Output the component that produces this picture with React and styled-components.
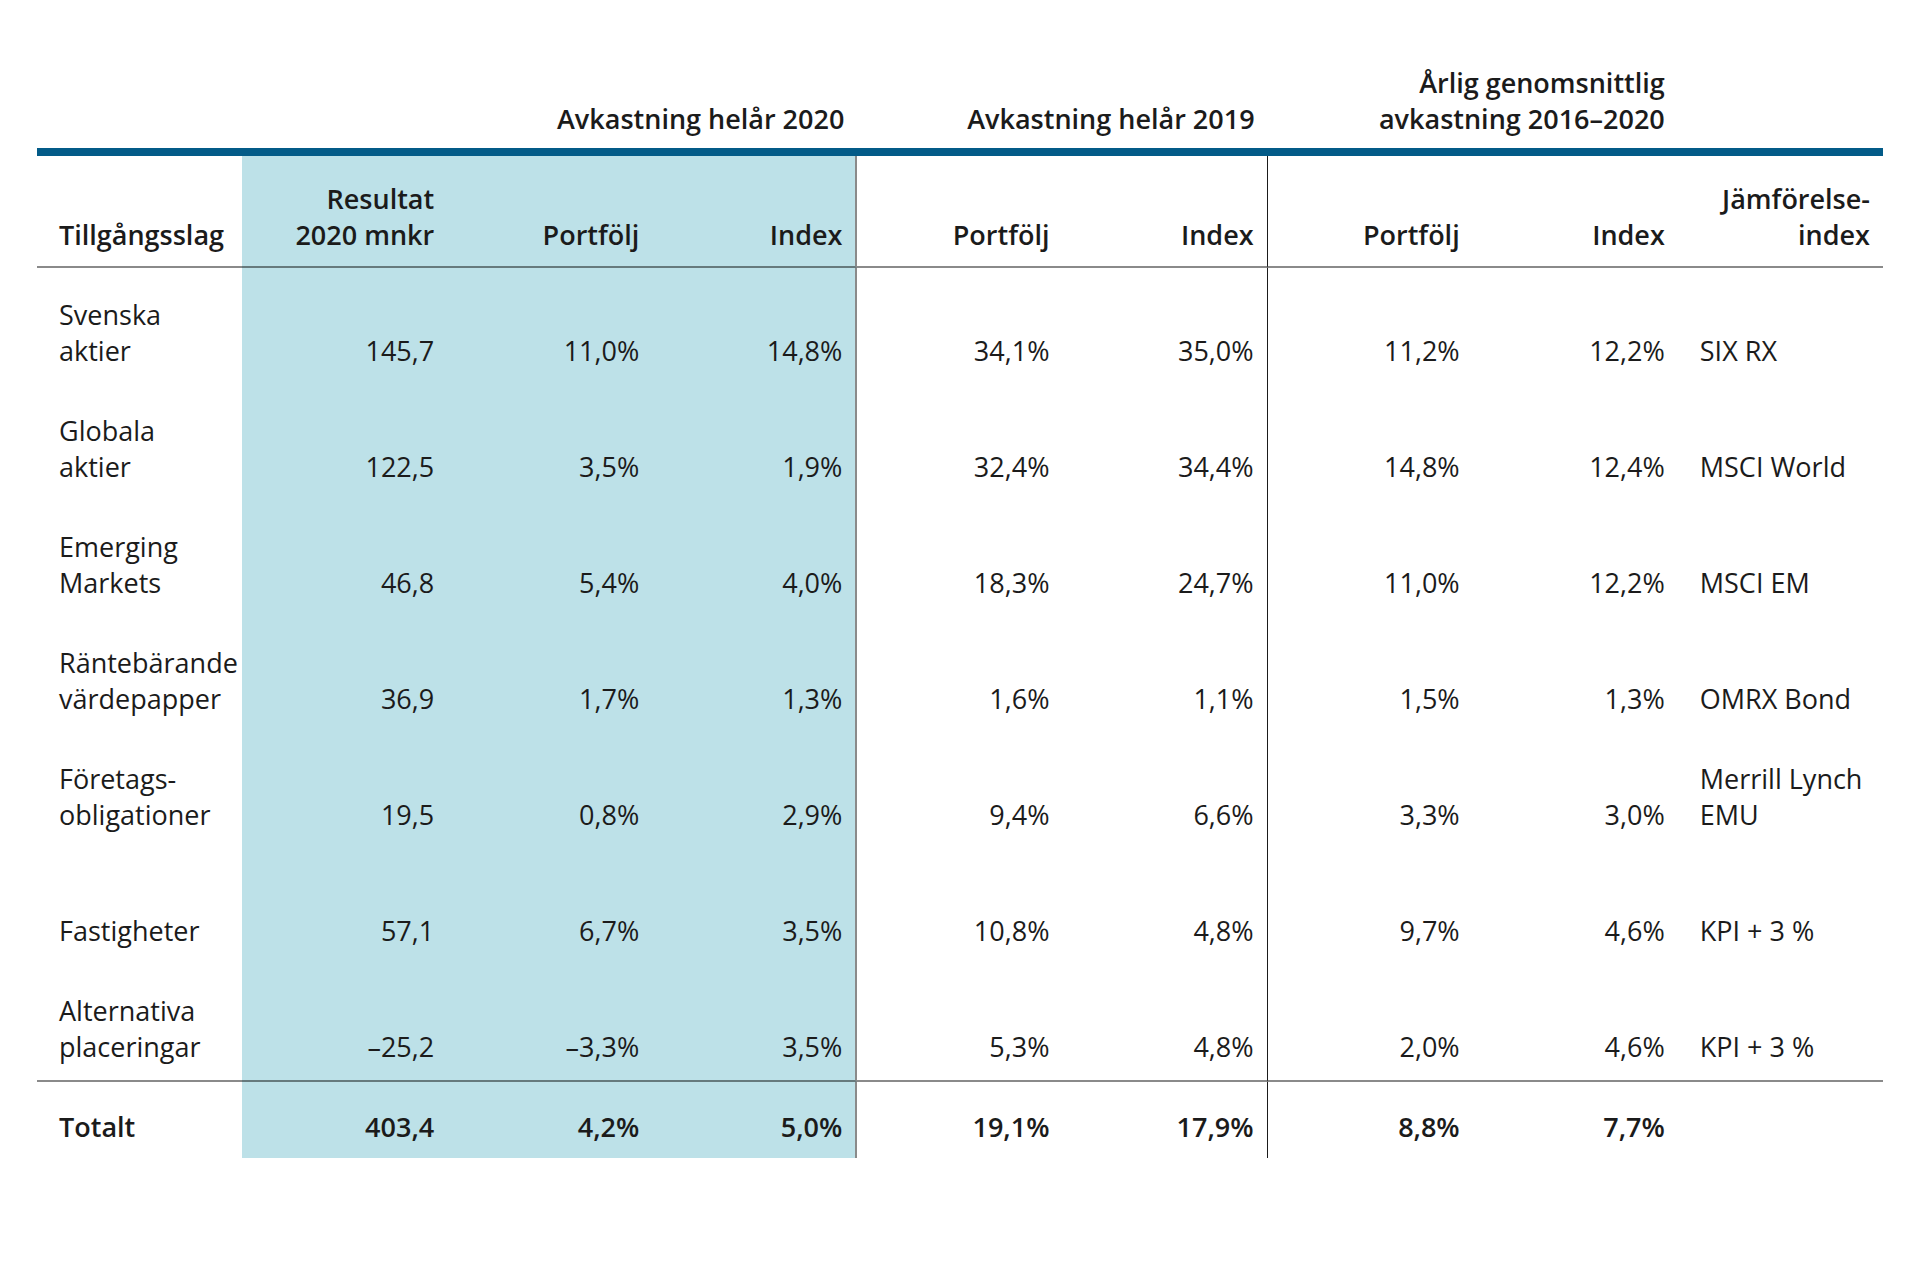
import React from 'react'
import styled, { createGlobalStyle, css } from 'styled-components'

const GlobalStyle = createGlobalStyle`
  html, body {
    margin: 0;
    padding: 0;
    background: #fff;
  }
  body {
    font-family: 'Open Sans', 'Noto Sans', 'Liberation Sans', sans-serif;
    color: #1b1b1b;
  }
`

const Page = styled.div`
  padding: 65px 37px 0;
`

const Table = styled.table`
  width: 1846px;
  table-layout: fixed;
  border-collapse: separate;
  border-spacing: 0;
  font-size: 27px;
  line-height: 36px;
`

const BodyRow = styled.tr`
  height: 116px;
`

const cellBase = css`
  padding: 0 13px 0 22px;
  vertical-align: bottom;
  text-align: ${(p) => p.$align || 'right'};
  white-space: nowrap;
  background: ${(p) => (p.$shade ? '#bde1e8' : 'transparent')};
  ${(p) =>
    p.$divider === 'soft' &&
    css`
      border-right: 2px solid #8a8a8a;
    `}
  ${(p) =>
    p.$divider === 'hard' &&
    css`
      border-right: 1px solid #1b1b1b;
    `}
`

const GroupCell = styled.th`
  ${cellBase};
  font-weight: 600;
  padding-bottom: 11px;
  border-bottom: 8px solid #035b88;
`

const HeadCell = styled.th`
  ${cellBase};
  font-weight: 600;
  padding-top: 25px;
  padding-bottom: 13px;
  border-bottom: 2px solid rgba(0, 0, 0, 0.46);
`

const Cell = styled.td`
  ${cellBase};
  font-weight: 400;
  padding-top: 29px;
  padding-bottom: 15px;
  ${(p) =>
    p.$last &&
    css`
      border-bottom: 2px solid rgba(0, 0, 0, 0.46);
    `}
`

const TotalCell = styled.td`
  ${cellBase};
  font-weight: 600;
  padding-top: 27px;
  padding-bottom: 13px;
`

const rows = [
  { label: ['Svenska', 'aktier'], values: ['145,7', '11,0%', '14,8%', '34,1%', '35,0%', '11,2%', '12,2%'], index: ['SIX RX'] },
  { label: ['Globala', 'aktier'], values: ['122,5', '3,5%', '1,9%', '32,4%', '34,4%', '14,8%', '12,4%'], index: ['MSCI World'] },
  { label: ['Emerging', 'Markets'], values: ['46,8', '5,4%', '4,0%', '18,3%', '24,7%', '11,0%', '12,2%'], index: ['MSCI EM'] },
  { label: ['Räntebärande', 'värdepapper'], values: ['36,9', '1,7%', '1,3%', '1,6%', '1,1%', '1,5%', '1,3%'], index: ['OMRX Bond'] },
  { label: ['Företags-', 'obligationer'], values: ['19,5', '0,8%', '2,9%', '9,4%', '6,6%', '3,3%', '3,0%'], index: ['Merrill Lynch', 'EMU'] },
  { label: ['Fastigheter'], values: ['57,1', '6,7%', '3,5%', '10,8%', '4,8%', '9,7%', '4,6%'], index: ['KPI + 3 %'] },
  { label: ['Alternativa', 'placeringar'], values: ['–25,2', '–3,3%', '3,5%', '5,3%', '4,8%', '2,0%', '4,6%'], index: ['KPI + 3 %'] },
]

const total = ['403,4', '4,2%', '5,0%', '19,1%', '17,9%', '8,8%', '7,7%']

const headers = ['Portfölj', 'Index', 'Portfölj', 'Index', 'Portfölj', 'Index']

// kolumn 2-4 är skuggade, avdelare efter kolumn 4 och 6
const shadeOf = (i) => i >= 1 && i <= 3
const dividerOf = (i) => (i === 3 ? 'soft' : i === 5 ? 'hard' : undefined)

const Lines = ({ lines }) =>
  lines.map((l, i) => (
    <React.Fragment key={i}>
      {i > 0 && <br />}
      {l}
    </React.Fragment>
  ))

const App = () => {
  return (
    <Page>
      <GlobalStyle />
      <Table>
        <colgroup>
          {Array.from({ length: 9 }).map((_, i) => (
            <col key={i} style={{ width: '205.1px' }} />
          ))}
        </colgroup>
        <thead>
          <tr>
            <GroupCell />
            <GroupCell colSpan={3}>Avkastning helår 2020</GroupCell>
            <GroupCell colSpan={2}>Avkastning helår 2019</GroupCell>
            <GroupCell colSpan={2}>
              Årlig genomsnittlig
              <br />
              avkastning 2016–2020
            </GroupCell>
            <GroupCell />
          </tr>
          <tr>
            <HeadCell $align="left">Tillgångsslag</HeadCell>
            <HeadCell $shade>
              Resultat
              <br />
              2020 mnkr
            </HeadCell>
            {headers.map((h, i) => (
              <HeadCell key={i} $shade={shadeOf(i + 2)} $divider={dividerOf(i + 2)}>
                {h}
              </HeadCell>
            ))}
            <HeadCell>
              Jämförelse-
              <br />
              index
            </HeadCell>
          </tr>
        </thead>
        <tbody>
          {rows.map((row, r) => {
            const last = r === rows.length - 1
            return (
              <BodyRow key={r}>
                <Cell $align="left" $last={last}>
                  <Lines lines={row.label} />
                </Cell>
                {row.values.map((v, i) => (
                  <Cell key={i} $last={last} $shade={shadeOf(i + 1)} $divider={dividerOf(i + 1)}>
                    {v}
                  </Cell>
                ))}
                <Cell $align="left" $last={last}>
                  <Lines lines={row.index} />
                </Cell>
              </BodyRow>
            )
          })}
          <tr>
            <TotalCell $align="left">Totalt</TotalCell>
            {total.map((v, i) => (
              <TotalCell key={i} $shade={shadeOf(i + 1)} $divider={dividerOf(i + 1)}>
                {v}
              </TotalCell>
            ))}
            <TotalCell />
          </tr>
        </tbody>
      </Table>
    </Page>
  )
}

export default App
